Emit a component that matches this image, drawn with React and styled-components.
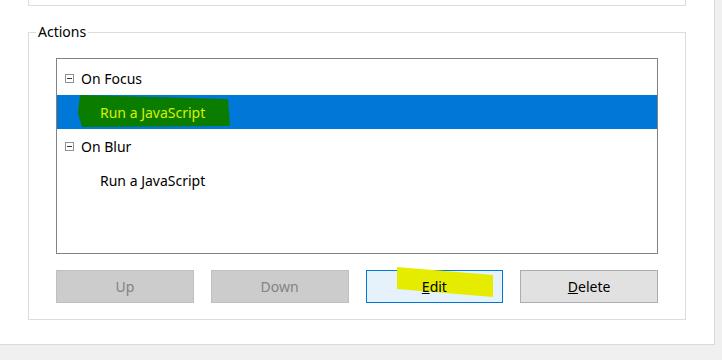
import styled, { createGlobalStyle } from "styled-components";

const Global = createGlobalStyle`
  html, body {
    margin: 0;
    padding: 0;
    background: #f0f0f0;
    font-family: "Segoe UI", "Noto Sans", sans-serif;
    font-size: 14px;
    color: #000;
  }
`;

const items = [
  {
    label: "On Focus",
    children: [{ label: "Run a JavaScript", selected: true }],
  },
  {
    label: "On Blur",
    children: [{ label: "Run a JavaScript" }],
  },
];

const buttons = [
  { label: "Up", disabled: true },
  { label: "Down", disabled: true },
  { label: "Edit", key: "E", rest: "dit", focused: true },
  { label: "Delete", key: "D", rest: "elete" },
];

const App = () => {
  return (
    <>
      <Global />
      <Window>
        <TopGroup />
        <Group>
          <Legend>Actions</Legend>
          <ListBox>
            {items.map((item) => (
              <div key={item.label}>
                <Row>
                  <Toggle />
                  <span>{item.label}</span>
                </Row>
                {item.children.map((child, i) => (
                  <Row key={i} $child $selected={child.selected}>
                    {child.selected && (
                      <GreenMark viewBox="0 0 152 34" preserveAspectRatio="none">
                        <polygon points="2,0 40,1 150,4 152,31 4,32 0,18" fill="#0a7d00" />
                      </GreenMark>
                    )}
                    <RowText>{child.label}</RowText>
                  </Row>
                ))}
              </div>
            ))}
          </ListBox>
          <ButtonRow>
            {buttons.map((b) => (
              <Button key={b.label} disabled={b.disabled} $focused={b.focused}>
                {b.focused && (
                  <YellowMark viewBox="0 0 100 32" preserveAspectRatio="none">
                    <polygon points="1,0 98,8 98,30 1,22" fill="#e6ec00" />
                  </YellowMark>
                )}
                <ButtonText>
                  {b.key ? (
                    <>
                      <u>{b.key}</u>
                      {b.rest}
                    </>
                  ) : (
                    b.label
                  )}
                </ButtonText>
              </Button>
            ))}
          </ButtonRow>
        </Group>
      </Window>
    </>
  );
};

export default App;

const Window = styled.div`
  width: 715px;
  height: 345px;
  background: #fff;
  border-right: 1px solid #dadada;
  border-bottom: 1px solid #dadada;
  padding: 0 28px;
  box-sizing: border-box;
  overflow: hidden;
`;

const TopGroup = styled.div`
  height: 6px;
  border: 1px solid #dcdcdc;
  border-top: none;
  box-sizing: border-box;
`;

const Group = styled.fieldset`
  margin: 16px 0 0;
  padding: 16px 27px 16px;
  border: 1px solid #dcdcdc;
  min-width: 0;
`;

const Legend = styled.legend`
  margin-left: -20px;
  padding: 0 2px;
  line-height: 20px;
  font-size: 14px;
`;

const ListBox = styled.div`
  height: 196px;
  border: 1px solid #828282;
  box-sizing: border-box;
  padding-top: 2px;
`;

const Row = styled.div`
  position: relative;
  height: 34px;
  display: flex;
  align-items: center;
  padding-left: ${(p) => (p.$child ? "43px" : "8px")};
  background: ${(p) => (p.$selected ? "#0078d7" : "transparent")};
  color: ${(p) => (p.$selected ? "#d8f000" : "#000")};
  gap: 7px;
`;

const RowText = styled.span`
  position: relative;
  z-index: 1;
`;

const Toggle = styled.span`
  position: relative;
  width: 9px;
  height: 9px;
  border: 1px solid #919191;
  box-sizing: border-box;
  margin-top: 1px;

  &::after {
    content: "";
    position: absolute;
    left: 1px;
    right: 1px;
    top: 3px;
    height: 1px;
    background: #333;
  }
`;

const GreenMark = styled.svg`
  position: absolute;
  left: 21px;
  top: 0;
  width: 152px;
  height: 34px;
`;

const ButtonRow = styled.div`
  display: grid;
  grid-template-columns: repeat(4, 1fr);
  gap: 17px;
  margin-top: 16px;
`;

const Button = styled.button`
  position: relative;
  height: 33px;
  font-family: inherit;
  font-size: 14px;
  padding: 0;
  border: 1px solid ${(p) => (p.disabled ? "#bfbfbf" : p.$focused ? "#0078d7" : "#adadad")};
  background: ${(p) => (p.disabled ? "#cccccc" : p.$focused ? "#e5f1fb" : "#e1e1e1")};
  color: ${(p) => (p.disabled ? "#838383" : "#000")};
  overflow: visible;
`;

const ButtonText = styled.span`
  position: relative;
  z-index: 1;
`;

const YellowMark = styled.svg`
  position: absolute;
  left: 29px;
  top: -4px;
  width: 99px;
  height: 32px;
`;
